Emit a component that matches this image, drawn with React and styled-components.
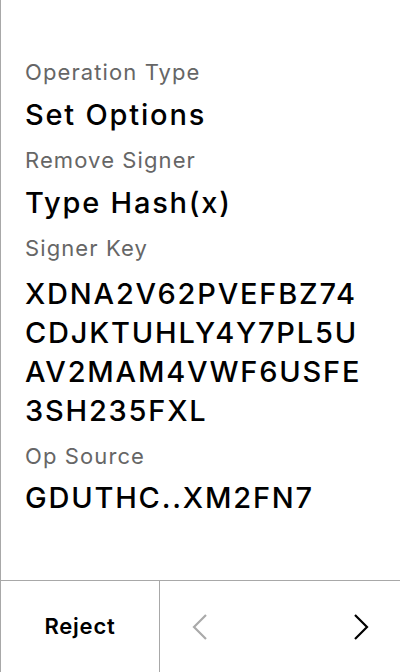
import React from "react";
import styled, { createGlobalStyle } from "styled-components";

const Global = createGlobalStyle`
  html, body, #root { margin: 0; padding: 0; height: 100%; }
  body { background: #fff; font-family: Inter, "Noto Sans", sans-serif; }
  * { box-sizing: border-box; }
`;

const Screen = styled.div`
  height: 672px;
  width: 400px;
  display: flex;
  flex-direction: column;
  border-left: 1px solid #a8a8a8;
  background: #fff;
`;

const Content = styled.div`
  flex: 1;
  padding: 57px 16px 0 24px;
  display: flex;
  flex-direction: column;
  gap: 11px;
`;

const Field = styled.div`
  display: flex;
  flex-direction: column;
  gap: 6px;
`;

const Label = styled.div`
  font-size: 22px;
  line-height: 30.8px;
  color: #666;
  font-weight: 400;
  letter-spacing: 1.1px;
`;

const Value = styled.div`
  font-size: 29px;
  line-height: 39.2px;
  color: #000;
  font-weight: 450;
  letter-spacing: 1.8px;
  white-space: nowrap;
  margin-top: ${(p) => (p.$multi ? "4px" : "1px")};
  margin-bottom: ${(p) => (p.$multi ? "-1px" : "0")};
`;

const Line = styled.div``;

const BottomBar = styled.div`
  height: 92px;
  border-top: 1px solid #a8a8a8;
  display: grid;
  grid-template-columns: 159px 1fr;
`;

const RejectButton = styled.button`
  all: unset;
  display: flex;
  align-items: center;
  justify-content: center;
  font-family: Inter, "Noto Sans", sans-serif;
  font-size: 22px;
  font-weight: 600;
  letter-spacing: 0.8px;
  color: #000;
  border-right: 1px solid #a8a8a8;
  padding-bottom: 2px;
`;

const Nav = styled.div`
  display: flex;
  align-items: center;
  justify-content: space-between;
  padding: 0 31px 0 32px;
`;

const NavButton = styled.button`
  all: unset;
  display: flex;
  color: ${(p) => (p.$disabled ? "#aaa" : "#000")};
`;

const Chevron = ({ dir }) => (
  <svg width="16" height="26" viewBox="0 0 16 26" fill="none">
    <path
      d={dir === "left" ? "M14 1 L2 13 L14 25" : "M2 1 L14 13 L2 25"}
      stroke="currentColor"
      strokeWidth="2.2"
      strokeLinecap="butt"
      strokeLinejoin="miter"
    />
  </svg>
);

const fields = [
  { label: "Operation Type", lines: ["Set Options"] },
  { label: "Remove Signer", lines: ["Type Hash(x)"] },
  {
    label: "Signer Key",
    lines: ["XDNA2V62PVEFBZ74", "CDJKTUHLY4Y7PL5U", "AV2MAM4VWF6USFE", "3SH235FXL"],
    multi: true,
  },
  { label: "Op Source", lines: ["GDUTHC..XM2FN7"] },
];

export default function App() {
  return (
    <>
      <Global />
      <Screen>
        <Content>
          {fields.map((f) => (
            <Field key={f.label}>
              <Label>{f.label}</Label>
              <Value $multi={f.multi}>
                {f.lines.map((l) => (
                  <Line key={l}>{l}</Line>
                ))}
              </Value>
            </Field>
          ))}
        </Content>
        <BottomBar>
          <RejectButton>Reject</RejectButton>
          <Nav>
            <NavButton $disabled>
              <Chevron dir="left" />
            </NavButton>
            <NavButton>
              <Chevron dir="right" />
            </NavButton>
          </Nav>
        </BottomBar>
      </Screen>
    </>
  );
}
